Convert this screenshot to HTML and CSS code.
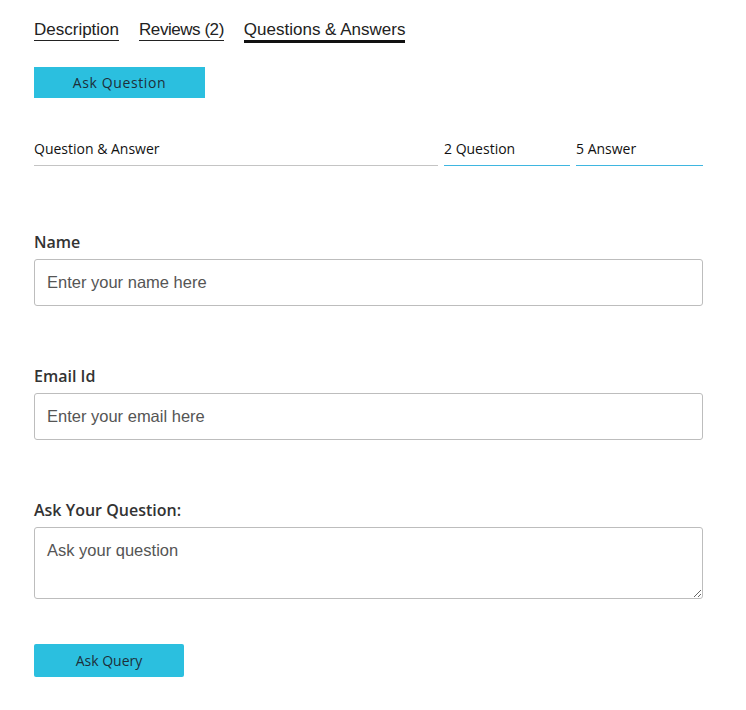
FILE: index.html
```html
<!DOCTYPE html>
<html>
<head>
<meta charset="utf-8">
<link rel="stylesheet" href="styles.css">
</head>
<body>
<div class="page">
  <nav class="tabs">
    <span class="tab">Description</span>
    <span class="tab tight">Reviews (2)</span>
    <span class="tab active">Questions &amp; Answers</span>
  </nav>
  <button class="btn btn-ask">Ask Question</button>
  <div class="stats">
    <div class="stat">Question &amp; Answer</div>
    <div class="stat blue">2 Question</div>
    <div class="stat blue">5 Answer</div>
  </div>
  <form class="form">
    <label class="label first">Name</label>
    <input class="field" type="text" placeholder="Enter your name here">
    <label class="label">Email Id</label>
    <input class="field" type="text" placeholder="Enter your email here">
    <label class="label">Ask Your Question:</label>
    <textarea class="field area" placeholder="Ask your question"></textarea>
    <button type="button" class="btn btn-query">Ask Query</button>
  </form>
</div>
</body>
</html>
```
FILE: styles.css
```css
* { box-sizing: border-box; }
body { margin: 0; background: #fff; }
.page { padding: 20px 0 0 34px; width: 703px; }
.tabs { display: flex; gap: 20px; align-items: flex-start; height: 23px; }
.tab {
  font-family: "Liberation Sans", Arial, sans-serif;
  font-size: 17px; line-height: 20px; color: #222;
  border-bottom: 1px solid #222;
}
.tab.tight { letter-spacing: -0.45px; }
.tab.active { border-bottom: 3px solid #111; }
.btn {
  display: block; border: none; background: #2bbfdf; color: #1d2f3a;
  font-family: "Open Sans", sans-serif; font-size: 14px; padding: 0; cursor: pointer;
}
.btn-ask { margin-top: 24px; width: 171px; height: 31px; letter-spacing: 0.6px; }
.stats {
  display: grid; grid-template-columns: 1fr 126px 127px; gap: 6px;
  margin-top: 41px;
}
.stat {
  font-family: "Open Sans", sans-serif; font-size: 14px; line-height: 20px;
  color: #111;
  padding-bottom: 6px; border-bottom: 1px solid #c4c4c4;
}
.stat.blue { border-bottom-color: #3fb6e0; }
.form { display: flex; flex-direction: column; }
.label {
  font-family: "Open Sans", sans-serif; font-weight: 600; font-size: 16px;
  line-height: 22px; color: #333; margin-top: 59px; margin-bottom: 6px;
}
.label.first { margin-top: 65px; }
.field {
  width: 100%; height: 47px; border: 1px solid #bdbdbd; border-radius: 3px;
  padding: 0 12px; font-family: "Liberation Sans", Arial, sans-serif; font-size: 16.5px;
  color: #333; background: #fff; margin: 0;
}
.field::placeholder { color: #555; }
.area { height: 72px; padding: 13px 12px; resize: vertical; }
.btn-query { margin-top: 45px; width: 150px; height: 33px; border-radius: 2px; }
```
